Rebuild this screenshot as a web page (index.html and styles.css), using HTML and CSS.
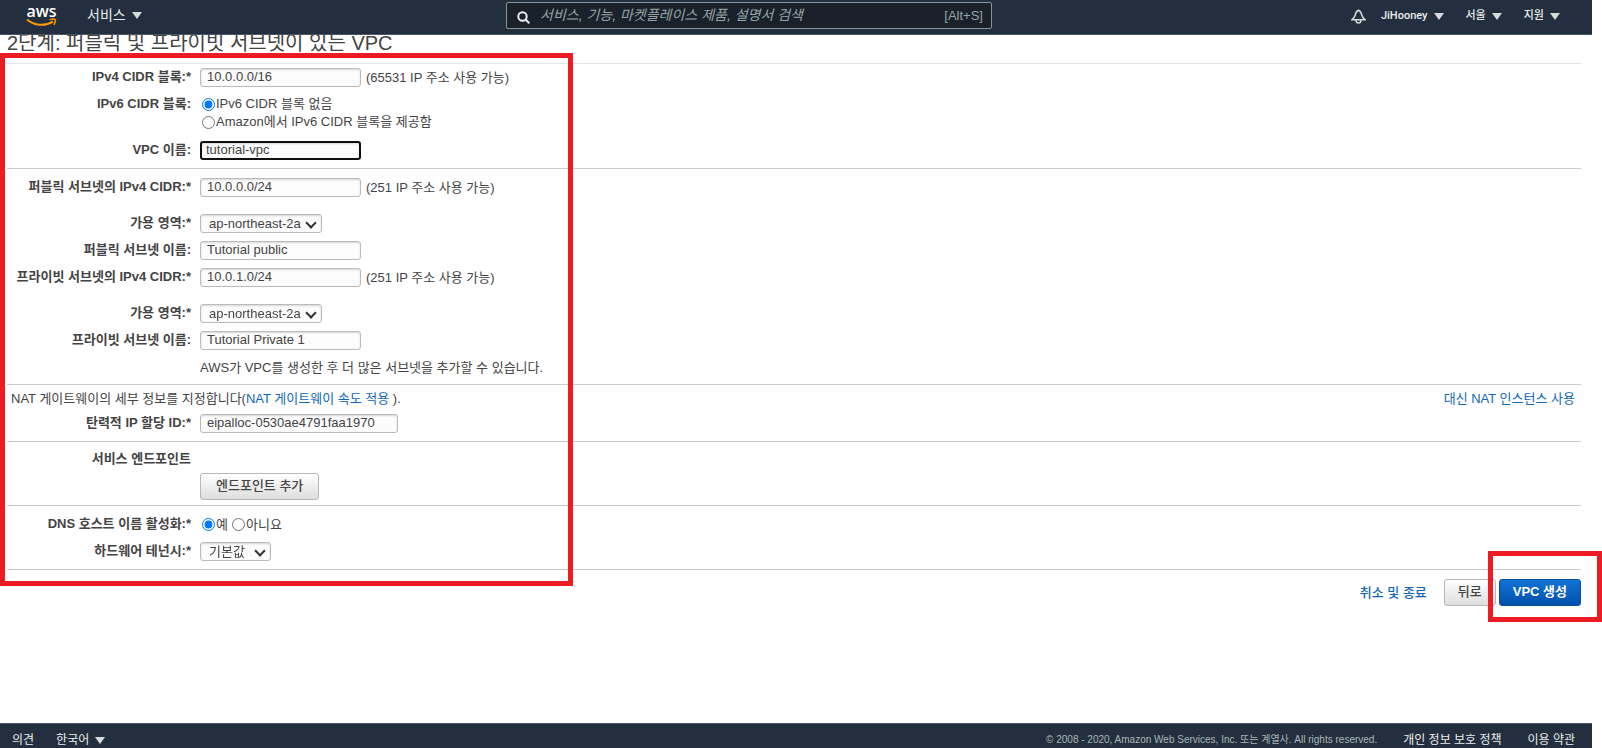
FILE: index.html
```html
<!DOCTYPE html>
<html lang="ko">
<head>
    <meta charset="UTF-8">
    <meta name="viewport" content="width=device-width, initial-scale=1.0">
    <title>VPC 생성</title>
    <link rel="stylesheet" href="styles.css">
</head>
<body>

<header class="topbar">
    <div class="topbar-left">
        <a href="#" class="logo" aria-label="aws">
            <span>aws</span>
            <svg width="31" height="9" viewBox="0 0 31 9" fill="none" stroke="#f90">
                <path d="M1 1.5C8 7.8 19 8.6 27 3.6" stroke-width="2"/>
                <path d="M23.5 1.6c2.5-.7 4.8-.8 5.6 0 .7.9 0 3.3-1.3 5.2" stroke-width="1.5"/>
            </svg>
        </a>
        <button type="button" class="menu menu-services">서비스 <i class="arrow"></i></button>
    </div>
    <div class="search">
        <svg width="13" height="13" viewBox="0 0 13 13" fill="none" stroke="#eaeded" stroke-width="2">
            <circle cx="5.5" cy="5.5" r="4.2"/>
            <path d="M8.5 8.5l3.800 3.800"/>
        </svg>
        <input type="text" aria-label="검색" placeholder="서비스, 기능, 마켓플레이스 제품, 설명서 검색">
        <span>[Alt+S]</span>
    </div>
    <div class="topbar-right">
        <svg class="bell" width="15" height="15" viewBox="0 0 15 15" fill="none" stroke="#d5dbdb" stroke-width="1.5">
            <path d="M.8 10.800h13.400c-2.200-1.300-2.800-2.500-3.400-4.800C10.300 3.500 9.300 2 7.500 1.200 5.700 2 4.700 3.500 4.200 6 3.600 8.300 3 9.500.8 10.800z"/>
            <path d="M5.200 11v1c0 2.600 4.600 2.600 4.600 0v-1"/>
        </svg>
        <button type="button" class="menu">JiHooney <i class="arrow"></i></button>
        <button type="button" class="menu">서울 <i class="arrow"></i></button>
        <button type="button" class="menu">지원 <i class="arrow"></i></button>
    </div>
</header>

<main>
    <div class="highlight highlight-form"></div>
    <h1>2단계: 퍼블릭 및 프라이빗 서브넷이 있는 VPC</h1>

    <form>
        <section class="section section-first">
            <div class="row">
                <label class="label" for="vpc-cidr">IPv4 CIDR 블록:*</label>
                <div class="field"><input type="text" id="vpc-cidr" value="10.0.0.0/16"> (65531 IP 주소 사용 가능)</div>
            </div>
            <div class="row">
                <span class="label">IPv6 CIDR 블록:</span>
                <div class="field-stack">
                    <label class="radio"><input type="radio" name="ipv6" checked>IPv6 CIDR 블록 없음</label>
                    <label class="radio"><input type="radio" name="ipv6">Amazon에서 IPv6 CIDR 블록을 제공함</label>
                </div>
            </div>
            <div class="row">
                <label class="label" for="vpc-name">VPC 이름:</label>
                <div class="field"><input type="text" id="vpc-name" class="active" value="tutorial-vpc"></div>
            </div>
        </section>

        <section class="section section-subnets">
            <div class="row row-spaced">
                <label class="label" for="public-cidr">퍼블릭 서브넷의 IPv4 CIDR:*</label>
                <div class="field"><input type="text" id="public-cidr" value="10.0.0.0/24"> (251 IP 주소 사용 가능)</div>
            </div>
            <div class="row">
                <label class="label" for="public-zone">가용 영역:*</label>
                <div class="field">
                    <span class="select"><select id="public-zone" class="zone"><option>ap-northeast-2a</option></select></span>
                </div>
            </div>
            <div class="row">
                <label class="label" for="public-name">퍼블릭 서브넷 이름:</label>
                <div class="field"><input type="text" id="public-name" value="Tutorial public"></div>
            </div>
            <div class="row row-spaced">
                <label class="label" for="private-cidr">프라이빗 서브넷의 IPv4 CIDR:*</label>
                <div class="field"><input type="text" id="private-cidr" value="10.0.1.0/24"> (251 IP 주소 사용 가능)</div>
            </div>
            <div class="row">
                <label class="label" for="private-zone">가용 영역:*</label>
                <div class="field">
                    <span class="select"><select id="private-zone" class="zone"><option>ap-northeast-2a</option></select></span>
                </div>
            </div>
            <div class="row">
                <label class="label" for="private-name">프라이빗 서브넷 이름:</label>
                <div class="field"><input type="text" id="private-name" value="Tutorial Private 1"></div>
            </div>
            <div class="row">
                <span></span>
                <div class="field">AWS가 VPC를 생성한 후 더 많은 서브넷을 추가할 수 있습니다.</div>
            </div>
        </section>

        <section class="section section-nat">
            <div class="nat-info">
                <span>NAT 게이트웨이의 세부 정보를 지정합니다(<a href="#">NAT 게이트웨이 속도 적용</a> ).</span>
                <a href="#">대신 NAT 인스턴스 사용</a>
            </div>
            <div class="row">
                <label class="label" for="eip">탄력적 IP 할당 ID:*</label>
                <div class="field"><input type="text" id="eip" class="wide" value="eipalloc-0530ae4791faa1970"></div>
            </div>
        </section>

        <section class="section section-endpoint">
            <div class="row">
                <span class="label">서비스 엔드포인트</span>
            </div>
            <div class="row">
                <span></span>
                <div class="field"><button type="button" class="btn btn-add">엔드포인트 추가</button></div>
            </div>
        </section>

        <section class="section">
            <div class="row">
                <span class="label">DNS 호스트 이름 활성화:*</span>
                <div class="field field-radios">
                    <label class="radio"><input type="radio" name="dns" checked>예</label>
                    <label class="radio"><input type="radio" name="dns">아니요</label>
                </div>
            </div>
            <div class="row">
                <label class="label" for="tenancy">하드웨어 테넌시:*</label>
                <div class="field">
                    <span class="select"><select id="tenancy" class="tenancy"><option>기본값</option></select></span>
                </div>
            </div>
        </section>

        <div class="actions">
            <a href="#">취소 및 종료</a>
            <button type="button" class="btn">뒤로</button>
            <div class="create">
                <div class="highlight highlight-create"></div>
                <button type="button" class="btn btn-primary">VPC 생성</button>
            </div>
        </div>
    </form>
</main>

<footer class="footer">
    <div class="footer-left">
        <a href="#">의견</a>
        <button type="button" class="menu">한국어 <i class="arrow"></i></button>
    </div>
    <div class="footer-right">
        <span class="copyright">© 2008 - 2020, Amazon Web Services, Inc. 또는 계열사. All rights reserved.</span>
        <a href="#">개인 정보 보호 정책</a>
        <a href="#">이용 약관</a>
    </div>
</footer>

<script>
    // put the cursor after the VPC name
    const vpcName = document.getElementById('vpc-name');
    vpcName.focus();
    vpcName.setSelectionRange(vpcName.value.length, vpcName.value.length);
</script>

</body>
</html>
```
FILE: styles.css
```css
* {
    box-sizing: border-box;
}
body {
    margin: 0;
    min-height: 100vh;
    display: flex;
    flex-direction: column;
    overflow-x: hidden;
    background-color: #fff;
    color: #444;
    font-family: "Liberation Sans", "Noto Sans CJK KR", sans-serif;
    font-size: 13px;
    line-height: 19px;
}
input, select, button {
    margin: 0;
    color: inherit;
    font: inherit;
}
a {
    color: #16b;
    text-decoration: none;
}

/* top bar */
.topbar {
    position: relative;
    z-index: 1;
    display: flex;
    height: 35px;
    margin-right: 10px;
    background-color: #232f3e;
    border-bottom: 1px solid #4b5563;
    color: #eaeded;
}
.topbar-left {
    display: flex;
    align-items: flex-start;
    width: 506px;
    padding-left: 26px;
}
.logo {
    display: flex;
    flex-direction: column;
    align-items: center;
    width: 31px;
    margin-right: 30px;
    padding-top: 4px;
    color: #fff;
    font-family: "Open Sans", sans-serif;
    font-size: 16px;
    font-weight: 600;
    line-height: 14px;
}
.menu {
    display: flex;
    align-items: center;
    gap: 6px;
    padding: 0;
    border: none;
    background: none;
    font-family: Roboto, "Noto Sans CJK KR", sans-serif;
    font-size: 11px;
    font-weight: 500;
    line-height: 16px;
    cursor: pointer;
}
.menu-services {
    font-size: 14px;
    font-weight: 400;
    margin-top: 7px;
}
.arrow {
    border: 5px solid transparent;
    border-top: 7px solid #d5dbdb;
    border-bottom: none;
}
.search {
    display: flex;
    align-items: center;
    width: 486px;
    height: 27px;
    margin-top: 2px;
    padding: 0 8px 0 10px;
    background-color: #1a212b;
    border: 1px solid #879596;
    border-radius: 2px;
    color: #95a5a6;
}
.search svg {
    margin-top: 4px;
}
.search input {
    flex: 1;
    min-width: 0;
    padding: 0 10px;
    border: none;
    outline: none;
    background: none;
    font-size: 14px;
}
.search input::placeholder {
    color: #95a5a6;
    font-style: italic;
}
.topbar-right {
    display: flex;
    flex: 1;
    justify-content: flex-end;
    align-items: center;
    gap: 22px;
    padding: 0 32px 2px 0;
}
.bell {
    margin-right: -7px;
}

/* form */
main {
    position: relative;
    flex: 1;
    padding: 0 21px 0 7px;
}
h1 {
    margin: -6px 0 0;
    padding-bottom: 6px;
    border-bottom: 1px solid #e5e5e5;
    font-size: 20px;
    font-weight: 400;
    line-height: 28px;
}
.section {
    display: flex;
    flex-direction: column;
    gap: 8px;
    padding: 9px 0 8px;
    border-bottom: 1px solid #ccc;
}
.section-first {
    padding-top: 4px;
}
.section-subnets {
    padding-bottom: 7px;
}
.section-nat {
    gap: 6px;
    padding-top: 4px;
}
.section-endpoint {
    gap: 6px;
    padding: 8px 0 5px;
}
.row {
    display: grid;
    grid-template-columns: 184px 1fr;
    column-gap: 9px;
}
.row-spaced {
    margin-bottom: 9px;
}
.label {
    font-weight: 700;
    line-height: 17px;
    text-align: right;
    white-space: nowrap;
}
.field {
    display: flex;
    align-items: center;
    gap: 5px;
    min-height: 19px;
    line-height: 17px;
}
.field-radios {
    gap: 2px;
}
.field-stack {
    display: flex;
    flex-direction: column;
    padding-bottom: 2px;
}
.field-stack .radio {
    line-height: 18px;
}
.field input[type="text"], .select select {
    height: 19px;
    border: 1px solid #bbb;
    border-radius: 3px;
    background-color: #fcfcfc;
    box-shadow: inset 0 1px 2px rgba(0, 0, 0, 0.15);
    line-height: 15px;
}
.field input[type="text"] {
    width: 161px;
    padding: 0 6px 2px;
}
.field input.wide {
    width: 198px;
}
.field input.active {
    border: 2px solid #101010;
    padding: 0 4px 2px;
    outline: none;
}
.select {
    position: relative;
}
.select select {
    display: block;
    appearance: none;
    padding: 0 16px 1px 8px;
}
.select::after {
    content: "";
    position: absolute;
    right: 7px;
    top: 5px;
    width: 6px;
    height: 6px;
    border: solid #333;
    border-width: 0 2px 2px 0;
    transform: rotate(45deg);
    pointer-events: none;
}
.zone {
    width: 122px;
}
.tenancy {
    width: 71px;
}
.radio {
    display: flex;
    align-items: center;
    line-height: 19px;
}
.radio input {
    margin: 0 1px 0 2px;
}
.nat-info {
    display: flex;
    justify-content: space-between;
    padding: 0 6px 0 4px;
}
.btn {
    height: 27px;
    padding: 0 13px 2px;
    border: 1px solid #b8b8b8;
    border-radius: 3px;
    background: linear-gradient(#fff, #ddd);
    font-weight: 500;
    cursor: pointer;
}
.btn-add {
    padding: 0 15px 2px;
}
.btn-primary {
    border-color: #0a4fa0;
    background: linear-gradient(#1272d6, #0051ab);
    color: #fff;
    font-weight: 700;
}
.actions {
    display: flex;
    justify-content: flex-end;
    align-items: center;
    padding-top: 9px;
}
.actions a {
    margin-right: 17px;
    font-weight: 500;
}
.create {
    position: relative;
    margin-left: 3px;
}

/* red marker frames */
.highlight {
    position: absolute;
    border: 5px solid #ed1c24;
    pointer-events: none;
}
.highlight-form {
    top: 18px;
    left: 0;
    width: 573px;
    height: 533px;
}
.highlight-create {
    top: -28px;
    right: -21px;
    bottom: -16px;
    left: -11px;
}

/* footer */
.footer {
    display: flex;
    justify-content: space-between;
    height: 25px;
    margin-right: 10px;
    padding: 8px 17px 0 12px;
    background-color: #232f3e;
    border-top: 1px solid #4b5563;
    color: #eaeded;
    font-size: 12px;
    line-height: 16px;
}
.footer a {
    color: #eaeded;
}
.footer .menu {
    font-size: 12px;
    font-weight: 400;
}
.footer-left, .footer-right {
    display: flex;
    align-items: center;
    gap: 22px;
}
.footer-right {
    gap: 26px;
}
.copyright {
    color: #aab7b8;
    font-size: 10px;
}
```
